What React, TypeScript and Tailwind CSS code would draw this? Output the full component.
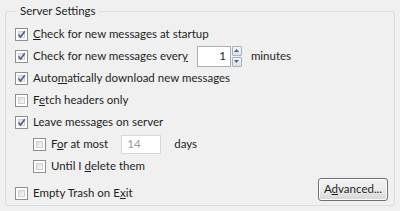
import type { ReactNode } from 'react';

function CheckBox({ checked }: { checked?: boolean }) {
    return (
        <span className="relative flex h-[13px] w-[13px] shrink-0 items-center justify-center border border-[#8e8f8f] bg-white">
            <span className="absolute inset-[2px] border border-[#d0d0d0] bg-gradient-to-br from-[#dcdcdc] to-[#f8f8f8]" />
            {checked && (
                <svg viewBox="0 0 9 9" className="relative h-[9px] w-[9px]">
                    <path d="M1.5 4.5 L3.6 7 L7.8 1.2" fill="none" stroke="#4b5f8e" strokeWidth="1.6" />
                </svg>
            )}
        </span>
    );
}

function Row({ checked, indent, children }: { checked?: boolean; indent?: boolean; children: ReactNode }) {
    return (
        <div className={`flex h-[22px] items-center gap-[5px] ${indent ? 'pl-[18px]' : ''}`}>
            <CheckBox checked={checked} />
            {children}
        </div>
    );
}

export default function App() {
    return (
        <div
            className="h-[211px] w-[400px] bg-[#f0f0f0] px-[5px] pt-[3px] text-[11.5px] text-[#1e1e1e]"
            style={{ fontFamily: 'Lato, "Open Sans", sans-serif' }}
        >
            <fieldset className="h-[203px] rounded-[3px] border border-[#d5dfe5] pl-[9px] pr-[6px]">
                <legend className="ml-[2px] px-[3px] leading-[16px]">Server Settings</legend>
                <div className="mt-[4px] flex flex-col">
                    <Row checked>
                        <span><u>C</u>heck for new messages at startup</span>
                    </Row>
                    <Row checked>
                        <span>Check for new messages ever<u>y</u></span>
                        <div className="ml-[4px] flex items-center">
                            <div className="flex h-[21px] w-[34px] items-center justify-end border border-[#abadb3] bg-white pr-[4px]">1</div>
                            <div className="ml-[1px] flex h-[21px] w-[10px] flex-col gap-[1px]">
                                <div className="flex flex-1 items-center justify-center rounded-[1px] border border-[#a8b1bd] bg-gradient-to-b from-[#f4f6f8] to-[#dde2e8]">
                                    <svg viewBox="0 0 5 3" className="h-[3px] w-[5px]"><path d="M0 3 L2.5 0 L5 3Z" fill="#4d6185" /></svg>
                                </div>
                                <div className="flex flex-1 items-center justify-center rounded-[1px] border border-[#a8b1bd] bg-gradient-to-b from-[#f4f6f8] to-[#dde2e8]">
                                    <svg viewBox="0 0 5 3" className="h-[3px] w-[5px]"><path d="M0 0 L2.5 3 L5 0Z" fill="#4d6185" /></svg>
                                </div>
                            </div>
                            <span className="ml-[9px]">minutes</span>
                        </div>
                    </Row>
                    <Row checked>
                        <span>Auto<u>m</u>atically download new messages</span>
                    </Row>
                    <Row>
                        <span>F<u>e</u>tch headers only</span>
                    </Row>
                    <Row checked>
                        <span>Leave messages on server</span>
                    </Row>
                    <Row indent>
                        <span>F<u>o</u>r at most</span>
                        <div className="ml-[8px] flex h-[19px] w-[40px] items-center border border-[#d9d9d9] bg-white pl-[5px] text-[#9a9a9a]">14</div>
                        <span className="ml-[8px]">days</span>
                    </Row>
                    <Row indent>
                        <span>Until I <u>d</u>elete them</span>
                    </Row>
                    <div className="mt-[5px] flex items-center justify-between">
                        <div className="flex h-[22px] items-center gap-[5px]">
                            <CheckBox />
                            <span>Empty Trash on E<u>x</u>it</span>
                        </div>
                        <button className="-mt-[8px] h-[23px] w-[70px] rounded-[3px] border border-[#707070] bg-gradient-to-b from-[#f2f2f2] via-[#ebebeb] to-[#d6d6d6] text-[11.5px] shadow-[inset_0_0_0_1px_#fcfcfc]">
                            A<u>d</u>vanced...
                        </button>
                    </div>
                </div>
            </fieldset>
        </div>
    );
}
